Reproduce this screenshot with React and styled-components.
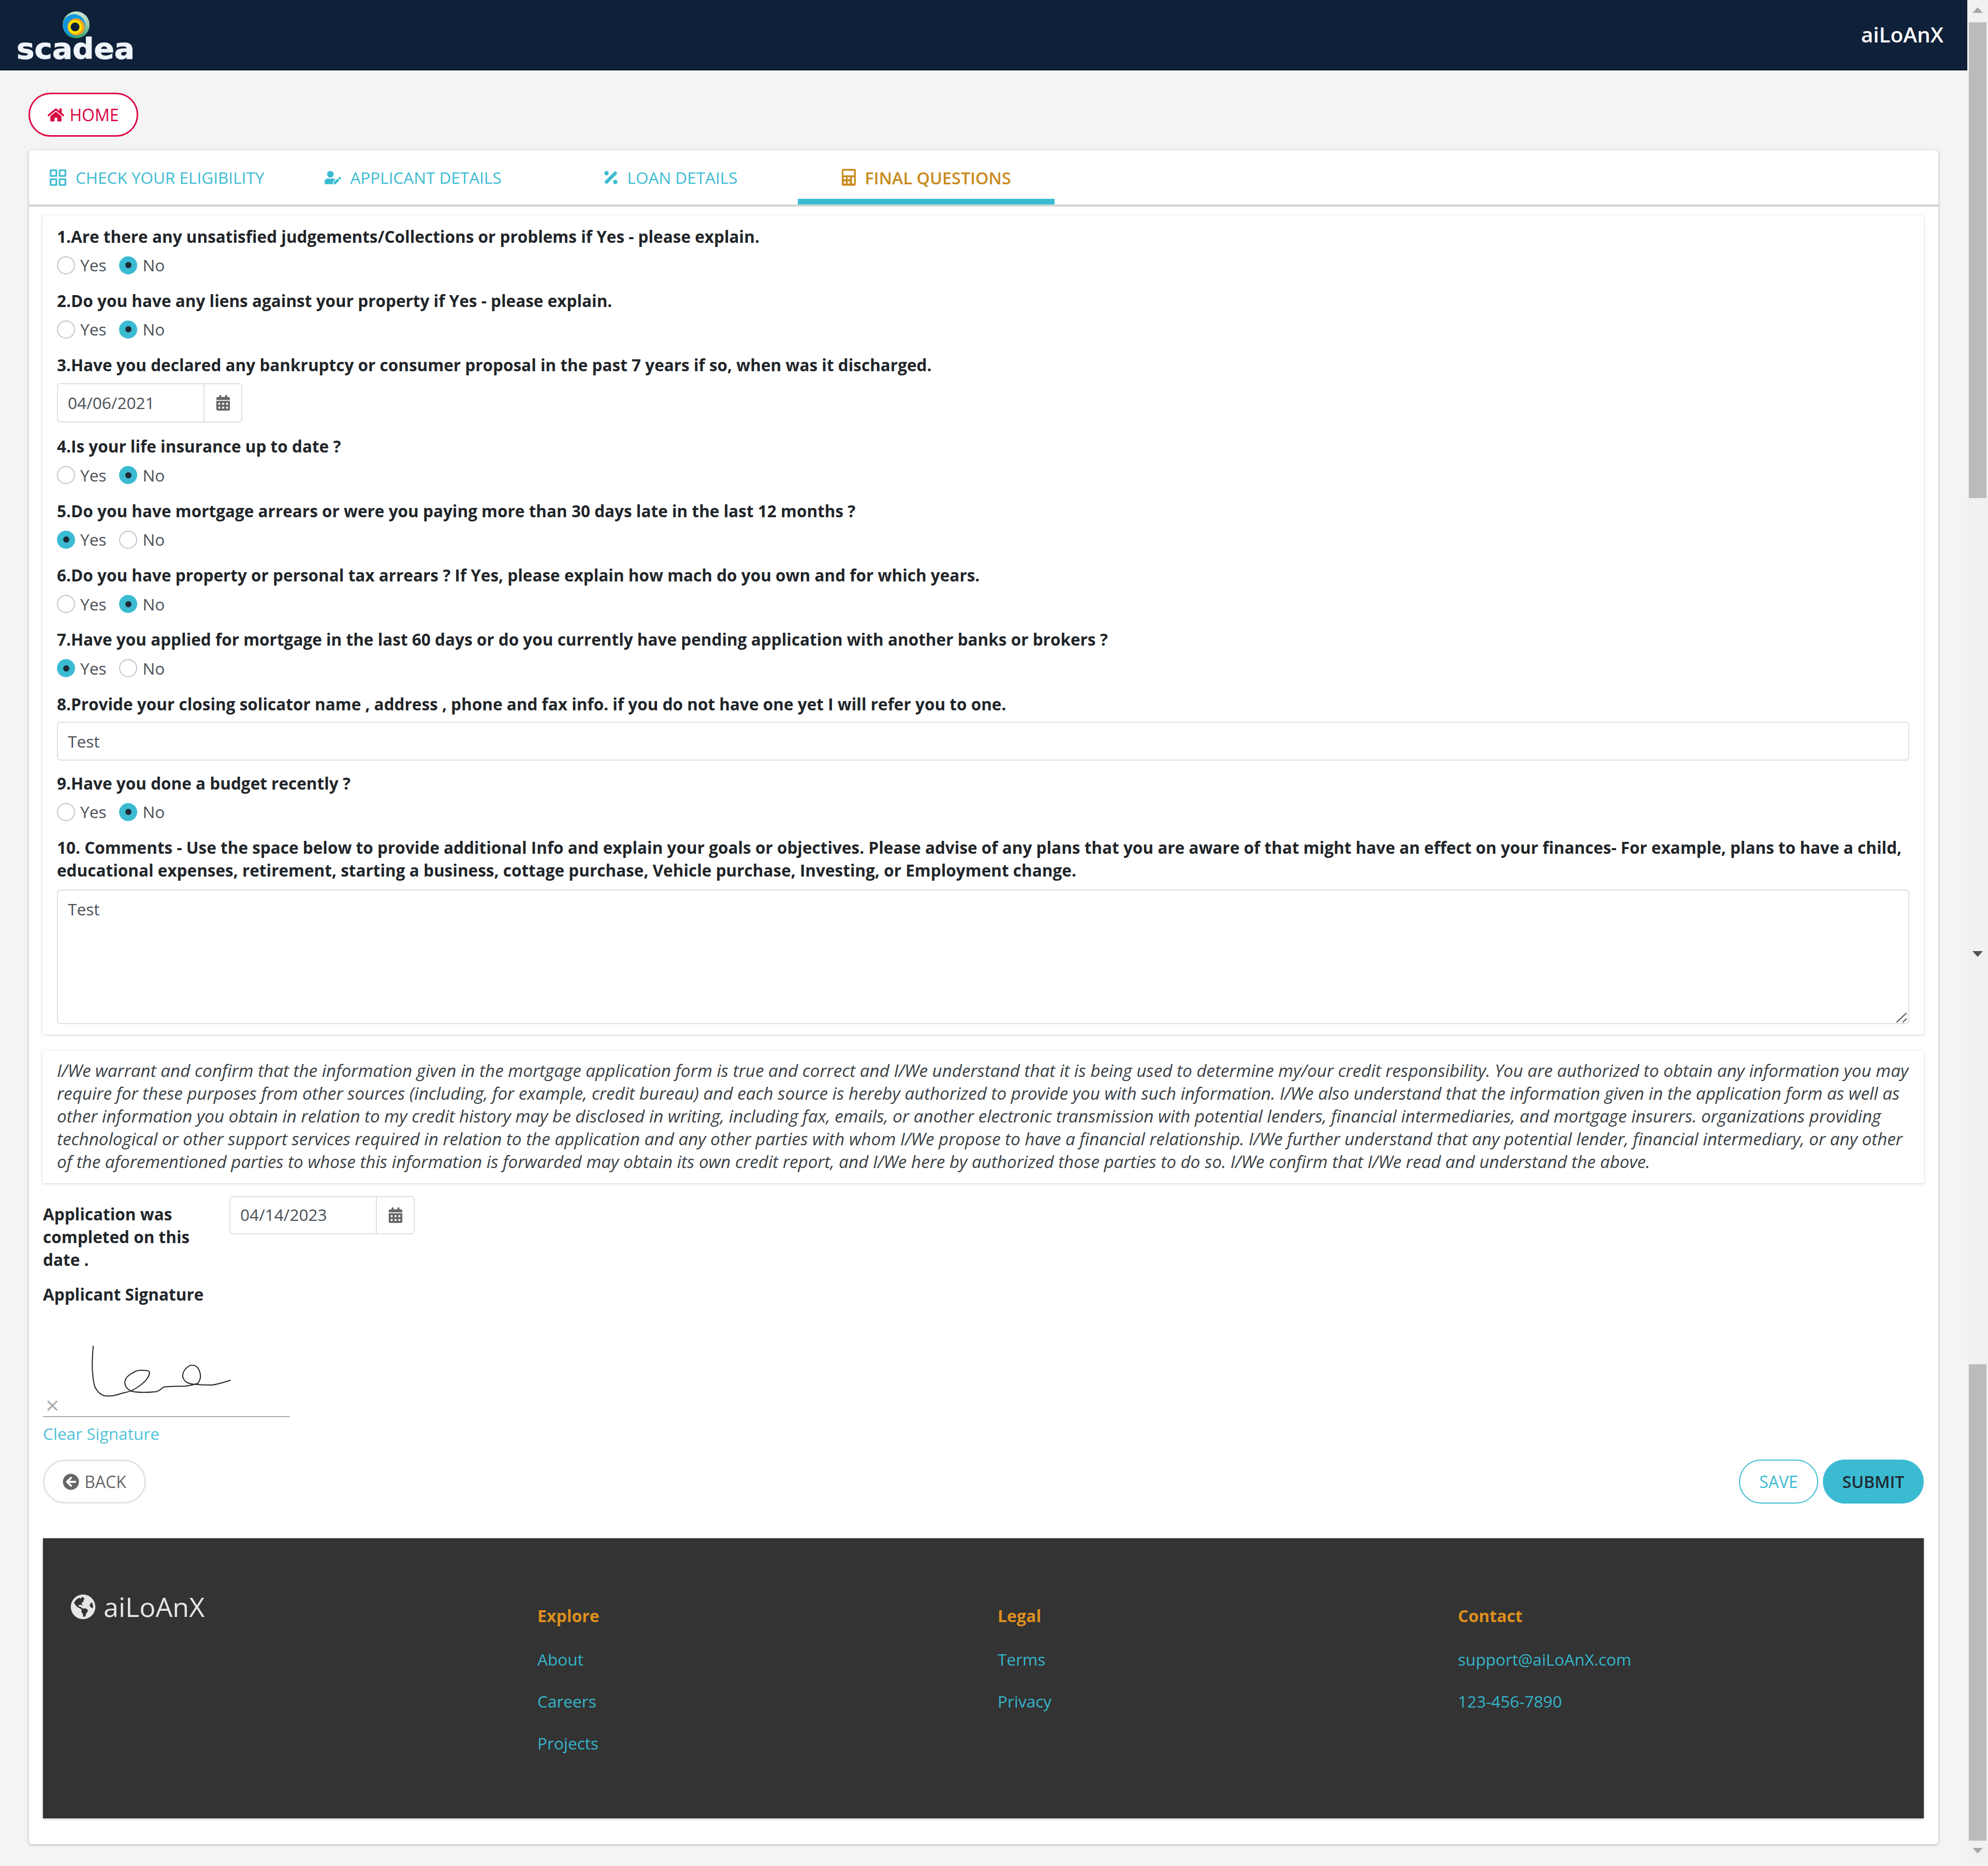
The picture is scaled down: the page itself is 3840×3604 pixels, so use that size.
import React from 'react';
import styled, { createGlobalStyle } from 'styled-components';
import { FaHome, FaCalendarAlt, FaArrowCircleLeft, FaGlobeAmericas, FaUserEdit, FaPercentage } from 'react-icons/fa';
import { FiGrid } from 'react-icons/fi';

const teal = '#3bbbd2';
const amber = '#c98a1b';

const GlobalStyle = createGlobalStyle`
  html, body {
    margin: 0;
    padding: 0;
    background: #f4f4f4;
  }
  body {
    font-family: "Open Sans", "Liberation Sans", sans-serif;
    font-size: 31.6px;
    line-height: 44px;
    color: #333333;
  }
`;

const Frame = styled.div`
  display: flex;
  width: 3840px;
  height: 3604px;
  overflow: hidden;
`;
const Page = styled.div`
  width: 3800px;
  flex: none;
`;

const ScrollBar = styled.div`
  width: 40px;
  height: 3604px;
  flex: none;
  background: #f1f1f1;
  display: flex;
  flex-direction: column;
  align-items: center;
`;
const Arrow = styled.div`
  width: 0;
  height: 0;
  border-left: 10px solid transparent;
  border-right: 10px solid transparent;
  margin-top: ${p => p.$top}px;
  ${p => (p.$up
    ? `border-bottom: 11px solid ${p.$color};`
    : `border-top: 11px solid ${p.$color};`)}
`;
const Thumb = styled.div`
  width: 34px;
  height: ${p => p.$height}px;
  margin-top: ${p => p.$top}px;
  background: #bbbbbb;
`;

const Header = styled.header`
  height: 136px;
  box-sizing: border-box;
  background: #0f2039;
  display: flex;
  align-items: center;
  justify-content: space-between;
  padding-right: 46px;
  border-bottom: 2px solid #04102a;
`;
const LogoSvg = styled.svg`
  display: block;
  width: 300px;
  height: 134px;
`;
const Brand = styled.span`
  color: #ffffff;
  font-size: 40.5px;
  font-weight: 600;
`;

const HomeRow = styled.div`
  padding: 43px 0 26px 55px;
`;
const PillButton = styled.button`
  display: inline-flex;
  align-items: center;
  justify-content: center;
  gap: 10px;
  box-sizing: border-box;
  width: ${p => p.$width}px;
  height: 85px;
  border-radius: 43px;
  padding: 0;
  font-family: inherit;
  font-size: 32px;
  font-weight: ${p => p.$weight || 400};
  background: ${p => p.$fill || '#ffffff'};
  color: ${p => p.$color};
  border: ${p => p.$border || 3}px solid ${p => p.$line};
`;

const Card = styled.main`
  width: 3688px;
  height: 3272px;
  margin-left: 56px;
  box-sizing: border-box;
  background: #ffffff;
  border-radius: 6px;
  box-shadow: 0 1px 5px rgba(0, 0, 0, 0.3);
  display: flex;
  flex-direction: column;
`;
const TabBar = styled.nav`
  height: 109px;
  flex: none;
  box-sizing: border-box;
  display: flex;
  border-bottom: 4px solid #d4d4d4;
`;
const Tab = styled.div`
  display: flex;
  align-items: center;
  gap: ${p => p.$gap}px;
  height: 105px;
  box-sizing: border-box;
  padding: 0 ${p => p.$right}px 0 ${p => p.$left}px;
  color: ${p => (p.$active ? amber : teal)};
  font-weight: ${p => (p.$active ? 600 : 400)};
  font-size: ${p => (p.$active ? 32.4 : 31.5)}px;
  border-bottom: ${p => (p.$active ? `11px solid ${teal}` : 'none')};
  padding-top: ${p => (p.$active ? 11 : 0)}px;
`;
const CalculatorIcon = styled.svg`
  display: block;
  width: 27px;
  height: 33px;
`;

const Section = styled.section`
  margin: 17px 28px 0 26px;
  padding: 17px 28px 20px;
  box-shadow: 0 1px 5px rgba(0, 0, 0, 0.18);
`;
const Question = styled.div`
  margin-bottom: ${p => p.$after || 23.4}px;
`;
const QuestionLabel = styled.div`
  padding-top: 1.5px;
  font-size: 31.5px;
  font-weight: 700;
  color: #212529;
`;
const RadioRow = styled.div`
  display: flex;
  align-items: center;
  height: 44px;
  margin-top: 11.5px;
  gap: 25px;
`;
const RadioLabel = styled.label`
  display: flex;
  align-items: center;
  gap: 10px;
  color: #495057;
`;
const RadioMark = styled.span`
  width: 35px;
  height: 35px;
  box-sizing: border-box;
  border-radius: 50%;
  border: 2px solid ${p => (p.$on ? teal : '#c4c4c4')};
  background: ${p => (p.$on ? teal : '#ffffff')};
  display: flex;
  align-items: center;
  justify-content: center;
  &::after {
    content: '';
    display: ${p => (p.$on ? 'block' : 'none')};
    width: 12px;
    height: 12px;
    border-radius: 50%;
    background: #1f2a33;
  }
`;

const DateBox = styled.div`
  display: flex;
  width: 358px;
  height: ${p => p.$height}px;
  margin-top: ${p => p.$top || 0}px;
  box-sizing: border-box;
  flex: none;
  border: 2px solid #e0e0e0;
  border-radius: 6px;
  background: #ffffff;
`;
const DateText = styled.div`
  flex: 1;
  padding: ${p => p.$pad}px 0 0 19px;
  color: #495057;
`;
const DateIcon = styled.div`
  width: 71px;
  border-left: 2px solid #e0e0e0;
  display: flex;
  align-items: center;
  justify-content: center;
  color: #666666;
  font-size: 30px;
`;

const TextInput = styled.input`
  display: block;
  width: 100%;
  height: 75px;
  margin-top: 12.5px;
  box-sizing: border-box;
  padding: 0 19px;
  border: 2px solid #e0e0e0;
  border-radius: 6px;
  font: inherit;
  color: #495057;
`;
const TextAreaWrap = styled.div`
  position: relative;
  margin-top: 15px;
`;
const TextArea = styled.textarea`
  display: block;
  width: 100%;
  height: 259.5px;
  box-sizing: border-box;
  padding: 14px 19px;
  border: 2px solid #e0e0e0;
  border-radius: 6px;
  font: inherit;
  color: #495057;
  resize: none;
`;
const ResizeHandle = styled.svg`
  position: absolute;
  right: 5px;
  bottom: 3px;
  width: 20px;
  height: 19px;
`;

const Legal = styled.section`
  margin: 31px 28px 0 26px;
  padding: 17px 20px 19px 28px;
  height: 256px;
  box-sizing: border-box;
  box-shadow: 0 1px 5px rgba(0, 0, 0, 0.18);
  font-size: 33.2px;
  font-style: italic;
  color: #3a3f44;
`;

const Lower = styled.div`
  margin: 25px 28px 0 27px;
  flex: 1;
  display: flex;
  flex-direction: column;
`;
const CompletedRow = styled.div`
  display: grid;
  grid-template-columns: 360px auto;
  justify-content: start;
`;
const BoldText = styled.div`
  font-size: 31.5px;
  font-weight: 700;
  color: #212529;
  padding-top: ${p => p.$top || 0}px;
`;
const SignatureBox = styled.div`
  position: relative;
  width: 477px;
  height: 185px;
  margin-top: 28px;
  border-bottom: 2px solid #aaaaaa;
`;
const SignatureSvg = styled.svg`
  display: block;
`;
const SignMark = styled.span`
  position: absolute;
  left: 5px;
  bottom: 0;
  font-size: 46px;
  line-height: 44px;
  color: #aaaaaa;
`;
const ClearLink = styled.a`
  display: block;
  margin-top: 10px;
  color: #50c2d8;
`;
const ButtonRow = styled.div`
  display: flex;
  justify-content: space-between;
  margin-top: 28.5px;
`;
const RightButtons = styled.div`
  display: flex;
  gap: 9px;
`;

const Footer = styled.footer`
  height: 541px;
  margin-top: 67px;
  box-sizing: border-box;
  background: #333333;
  box-shadow: 0 1px 5px rgba(0, 0, 0, 0.25);
  padding: 109px 0 0 53px;
  display: grid;
  grid-template-columns: 902px 889px 889px 889px;
  align-items: start;
`;
const FooterBrand = styled.div`
  display: flex;
  align-items: center;
  gap: 15px;
  color: #e6e6e6;
  font-size: 52px;
  line-height: 56px;
  margin-top: -5px;
`;
const FooterColumn = styled.div`
  display: flex;
  flex-direction: column;
  padding-top: 19px;
`;
const ColumnTitle = styled.div`
  color: #dd8f1f;
  font-size: 32px;
  font-weight: 700;
  margin-bottom: 40px;
`;
const FooterLink = styled.a`
  color: #35b5cc;
  margin-bottom: 37px;
`;

const Logo = () => (
  <LogoSvg viewBox="0 0 300 134">
    <defs>
      <linearGradient id="ringGreen" x1="0.8" y1="0" x2="0.5" y2="1">
        <stop offset="0" stopColor="#d8ecdf" />
        <stop offset="1" stopColor="#2f9f63" />
      </linearGradient>
    </defs>
    <circle cx="147" cy="48" r="26" fill="url(#ringGreen)" />
    <circle cx="143" cy="49" r="21.5" fill="#0f97dd" />
    <circle cx="147" cy="52" r="16.5" fill="#f5a01c" />
    <circle cx="145" cy="52" r="13.5" fill="#ffe100" />
    <circle cx="145" cy="52" r="8.5" fill="#0f2039" />
    <text
      x="32"
      y="113"
      textLength="228"
      lengthAdjust="spacingAndGlyphs"
      fontFamily="DejaVu Sans"
      fontWeight="700"
      fontSize="56"
      fill="#eef4f9"
      stroke="#eef4f9"
      strokeWidth="1"
    >
      scadea
    </text>
  </LogoSvg>
);

const Calculator = () => (
  <CalculatorIcon viewBox="0 0 81 97">
    <rect width="81" height="97" rx="10" fill={amber} />
    <rect x="9" y="10" width="62" height="27" fill="#ffffff" />
    <rect x="11" y="47" width="13" height="13" fill="#ffffff" />
    <rect x="34" y="47" width="13" height="13" fill="#ffffff" />
    <rect x="11" y="72" width="13" height="13" fill="#ffffff" />
    <rect x="34" y="72" width="13" height="13" fill="#ffffff" />
    <rect x="59" y="47" width="12" height="38" fill="#ffffff" />
  </CalculatorIcon>
);

const Signature = () => (
  <SignatureSvg width="477" height="185" viewBox="0 0 477 185" fill="none" stroke="#222222" strokeWidth="2" strokeLinecap="round">
    <path d="M97 50C95 75 95 95 96 103C97 115 98 122 100 128C105 138 112 145 121 146C131 147 141 145 149 142C160 139 168 138 175 134C187 127 196 120 201 113C205 107 207 101 205 99C203 96 200 97 198 97C190 96 184 96 178 99C170 103 163 108 160 113C157 119 158 124 160 128C163 133 168 136 175 138C190 140 207 139 218 138C224 137 228 133 233 129C245 127 262 128 276 127C285 126 292 124 299 122C302 118 305 111 304 105C303 98 300 92 296 89C291 86 285 86 281 89C275 93 271 99 270 105C269 111 273 117 278 120C284 123 291 124 299 124C308 125 318 125 327 125C340 123 351 119 362 116" />
  </SignatureSvg>
);

function YesNo({ value }) {
  return (
    <RadioRow>
      <RadioLabel><RadioMark $on={value === 'yes'} />Yes</RadioLabel>
      <RadioLabel><RadioMark $on={value === 'no'} />No</RadioLabel>
    </RadioRow>
  );
}

function DateField({ value, height, top, pad }) {
  return (
    <DateBox $height={height} $top={top}>
      <DateText $pad={pad}>{value}</DateText>
      <DateIcon><FaCalendarAlt /></DateIcon>
    </DateBox>
  );
}

const App = () => (
  <Frame>
    <GlobalStyle />
    <Page>
      <Header>
        <Logo />
        <Brand>aiLoAnX</Brand>
      </Header>
      <HomeRow>
        <PillButton $width={212} $color="#d9003f" $line="#dc0a45"><FaHome />HOME</PillButton>
      </HomeRow>
      <Card>
        <TabBar>
          <Tab $left={37} $right={32} $gap={15}><FiGrid size={38} />CHECK YOUR ELIGIBILITY</Tab>
          <Tab $left={85} $right={84} $gap={17}><FaUserEdit size={32} />APPLICANT DETAILS</Tab>
          <Tab $left={110} $right={116} $gap={15}><FaPercentage size={34} />LOAN DETAILS</Tab>
          <Tab $active $left={85} $right={84} $gap={18}><Calculator />FINAL QUESTIONS</Tab>
        </TabBar>
        <Section>
          <Question>
            <QuestionLabel>1.Are there any unsatisfied judgements/Collections or problems if Yes - please explain.</QuestionLabel>
            <YesNo value="no" />
          </Question>
          <Question>
            <QuestionLabel>2.Do you have any liens against your property if Yes - please explain.</QuestionLabel>
            <YesNo value="no" />
          </Question>
          <Question $after={23}>
            <QuestionLabel>3.Have you declared any bankruptcy or consumer proposal in the past 7 years if so, when was it discharged.</QuestionLabel>
            <DateField value="04/06/2021" height={76} top={12.5} pad={14} />
          </Question>
          <Question>
            <QuestionLabel>4.Is your life insurance up to date ?</QuestionLabel>
            <YesNo value="no" />
          </Question>
          <Question>
            <QuestionLabel>5.Do you have mortgage arrears or were you paying more than 30 days late in the last 12 months ?</QuestionLabel>
            <YesNo value="yes" />
          </Question>
          <Question>
            <QuestionLabel>6.Do you have property or personal tax arrears ? If Yes, please explain how mach do you own and for which years.</QuestionLabel>
            <YesNo value="no" />
          </Question>
          <Question>
            <QuestionLabel>7.Have you applied for mortgage in the last 60 days or do you currently have pending application with another banks or brokers ?</QuestionLabel>
            <YesNo value="yes" />
          </Question>
          <Question $after={20}>
            <QuestionLabel>8.Provide your closing solicator name , address , phone and fax info. if you do not have one yet I will refer you to one.</QuestionLabel>
            <TextInput defaultValue="Test" />
          </Question>
          <Question>
            <QuestionLabel>9.Have you done a budget recently ?</QuestionLabel>
            <YesNo value="no" />
          </Question>
          <QuestionLabel>10. Comments - Use the space below to provide additional Info and explain your goals or objectives. Please advise of any plans that you are aware of that might have an effect on your finances- For example, plans to have a child, educational expenses, retirement, starting a business, cottage purchase, Vehicle purchase, Investing, or Employment change.</QuestionLabel>
          <TextAreaWrap>
            <TextArea defaultValue="Test" />
            <ResizeHandle viewBox="0 0 20 19" stroke="#555555" strokeWidth="2">
              <line x1="0" y1="19" x2="20" y2="0" />
              <line x1="12" y1="19" x2="20" y2="11" />
            </ResizeHandle>
          </TextAreaWrap>
        </Section>
        <Legal>
          I/We warrant and confirm that the information given in the mortgage application form is true and correct and I/We understand that it is being used to determine my/our credit responsibility. You are authorized to obtain any information you may require for these purposes from other sources (including, for example, credit bureau) and each source is hereby authorized to provide you with such information. I/We also understand that the information given in the application form as well as other information you obtain in relation to my credit history may be disclosed in writing, including fax, emails, or another electronic transmission with potential lenders, financial intermediaries, and mortgage insurers. organizations providing technological or other support services required in relation to the application and any other parties with whom I/We propose to have a financial relationship. I/We further understand that any potential lender, financial intermediary, or any other of the aforementioned parties to whose this information is forwarded may obtain its own credit report, and I/We here by authorized those parties to do so. I/We confirm that I/We read and understand the above.
        </Legal>
        <Lower>
          <CompletedRow>
            <BoldText $top={13}>Application was<br />completed on this<br />date .</BoldText>
            <DateField value="04/14/2023" height={74} pad={12} />
          </CompletedRow>
          <BoldText $top={23}>Applicant Signature</BoldText>
          <SignatureBox>
            <Signature />
            <SignMark>×</SignMark>
          </SignatureBox>
          <ClearLink>Clear Signature</ClearLink>
          <ButtonRow>
            <PillButton $width={199} $color="#666666" $line="#e2e2e2"><FaArrowCircleLeft />BACK</PillButton>
            <RightButtons>
              <PillButton $width={153} $color={teal} $line={teal} $border={2}>SAVE</PillButton>
              <PillButton $width={195} $color="#1f2a33" $line={teal} $fill={teal} $weight={600}>SUBMIT</PillButton>
            </RightButtons>
          </ButtonRow>
          <Footer>
            <FooterBrand><FaGlobeAmericas size={49} />aiLoAnX</FooterBrand>
            <FooterColumn>
              <ColumnTitle>Explore</ColumnTitle>
              <FooterLink>About</FooterLink>
              <FooterLink>Careers</FooterLink>
              <FooterLink>Projects</FooterLink>
            </FooterColumn>
            <FooterColumn>
              <ColumnTitle>Legal</ColumnTitle>
              <FooterLink>Terms</FooterLink>
              <FooterLink>Privacy</FooterLink>
            </FooterColumn>
            <FooterColumn>
              <ColumnTitle>Contact</ColumnTitle>
              <FooterLink>support@aiLoAnX.com</FooterLink>
              <FooterLink>123-456-7890</FooterLink>
            </FooterColumn>
          </Footer>
        </Lower>
      </Card>
    </Page>
    <ScrollBar>
      <Arrow $up $color="#a8a8a8" $top={14} />
      <Thumb $height={919} $top={18} />
      <Arrow $color="#505050" $top={875} />
      <Thumb $height={920} $top={787} />
      <Arrow $color="#a8a8a8" $top={14} />
    </ScrollBar>
  </Frame>
);

export default App;
